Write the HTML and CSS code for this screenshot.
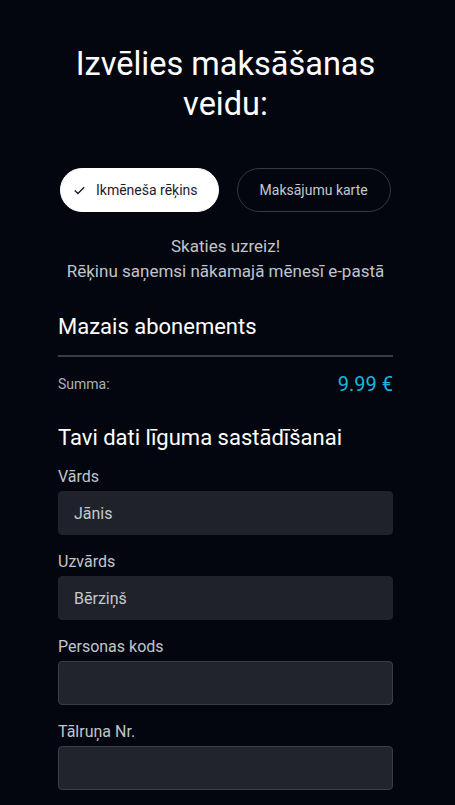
FILE: index.html
```html
<!DOCTYPE html>
<html lang="lv">
<head>
    <meta charset="UTF-8">
    <meta name="viewport" content="width=device-width, initial-scale=1.0">
    <title>Maksāšanas veids</title>
    <link rel="stylesheet" href="styles.css">
</head>
<body>
    <div class="container">
        <h1 class="title">Izvēlies maksāšanas veidu:</h1>

        <div class="pay-options">
            <button class="pill pill-active">
                <svg class="check" width="11" height="9" viewBox="0 0 11 9">
                    <path d="M0.8 4.6 L3.9 7.6 L10.2 1.2" fill="none" stroke="#1e1b2e" stroke-width="1.4"/>
                </svg>
                Ikmēneša rēķins
            </button>
            <button class="pill">Maksājumu karte</button>
        </div>

        <p class="note">Skaties uzreiz!<br>Rēķinu saņemsi nākamajā mēnesī e-pastā</p>

        <h2 class="plan">Mazais abonements</h2>
        <div class="sum-row">
            <span class="sum-label">Summa:</span>
            <span class="sum-price">9.99 €</span>
        </div>

        <h2 class="section">Tavi dati līguma sastādīšanai</h2>

        <div class="field">
            <label for="vards">Vārds</label>
            <input class="filled" id="vards" type="text" value="Jānis">
        </div>
        <div class="field">
            <label for="uzvards">Uzvārds</label>
            <input class="filled" id="uzvards" type="text" value="Bērziņš">
        </div>
        <div class="field">
            <label for="kods">Personas kods</label>
            <input id="kods" type="text">
        </div>
        <div class="field">
            <label for="talrunis">Tālruņa Nr.</label>
            <input id="talrunis" type="text">
        </div>
    </div>
</body>
</html>
```

FILE: styles.css
```css
body {
    font-family: Roboto, "Liberation Sans", Arial, sans-serif;
    background-color: #03060e;
    color: #ffffff;
    margin: 0;
    padding: 0;
}
.container {
    width: 335px;
    margin-left: 58px;
    padding-top: 44px;
}
.title {
    margin: 0;
    font-size: 32.5px;
    font-weight: 400;
    line-height: 40px;
    text-align: center;
    padding: 0 15px;
}
.pay-options {
    display: flex;
    gap: 18px;
    margin-top: 44px;
    padding-left: 2px;
}
.pill {
    display: flex;
    align-items: center;
    flex-shrink: 0;
    white-space: nowrap;
    height: 44px;
    box-sizing: border-box;
    padding: 0 22px;
    border: 1px solid #353843;
    border-radius: 22px;
    background: transparent;
    color: #c4c8d0;
    font-family: inherit;
    font-size: 14px;
    cursor: pointer;
}
.pill-active {
    background: #ffffff;
    border-color: #ffffff;
    color: #1e1b2e;
    padding-left: 13px;
    padding-right: 20px;
}
.check {
    margin-right: 11px;
}
.note {
    margin: 22px 0 0;
    font-size: 17px;
    line-height: 25px;
    text-align: center;
    color: #c0c4cc;
}
.plan {
    margin: 29px 0 0;
    font-size: 22px;
    font-weight: 400;
    line-height: 28px;
    padding-bottom: 14px;
    border-bottom: 2px solid #3a3c44;
}
.sum-row {
    display: flex;
    justify-content: space-between;
    align-items: center;
    margin-top: 13px;
    height: 28px;
}
.sum-label {
    font-size: 14px;
    color: #aab0b8;
}
.sum-price {
    font-size: 20px;
    color: #17b6df;
}
.section {
    margin: 26px 0 0;
    font-size: 22px;
    font-weight: 400;
    line-height: 28px;
}
.field {
    margin-top: 13px;
}
.field + .field {
    margin-top: 15px;
}
.field label {
    display: block;
    font-size: 16px;
    line-height: 24px;
    color: #c0c5cc;
    margin-bottom: 2px;
}
.field input {
    display: block;
    width: 100%;
    height: 44px;
    box-sizing: border-box;
    padding: 0 15px;
    border: 1px solid #3a3c48;
    border-radius: 4px;
    background: #21232d;
    color: #c5c9cf;
    font-family: inherit;
    font-size: 16px;
    outline: none;
}
.field input.filled {
    border-color: #1f222a;
    background: #1f222a;
}
```
